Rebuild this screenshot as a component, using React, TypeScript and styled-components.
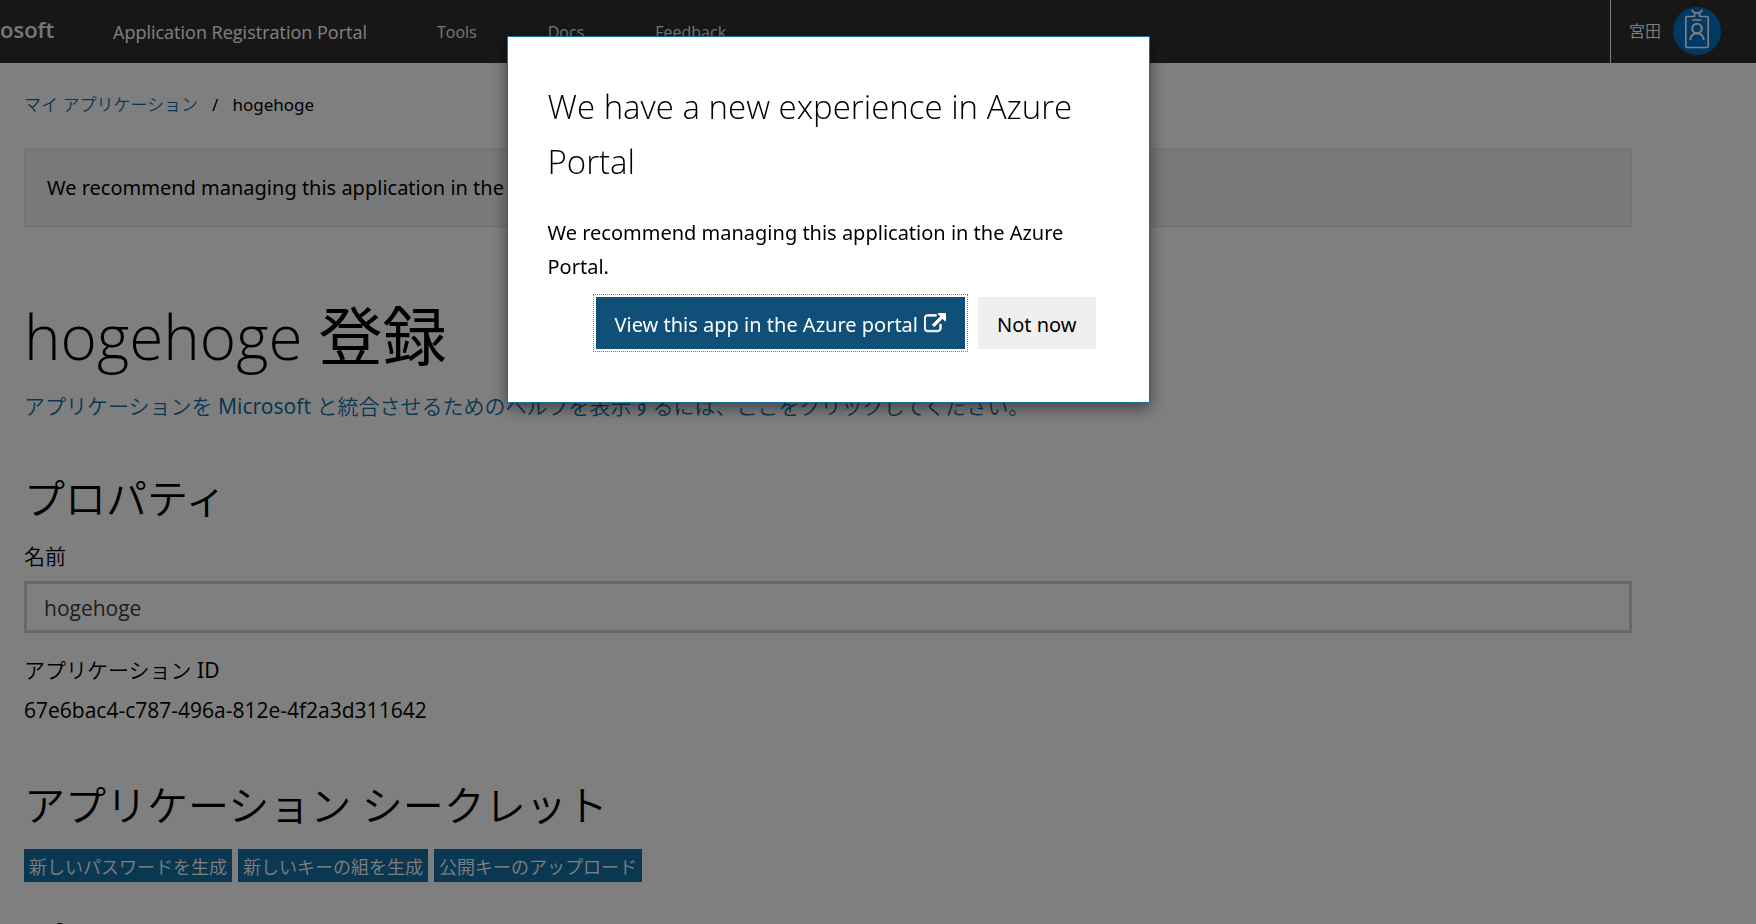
import React from "react";
import styled, { createGlobalStyle } from "styled-components";

const textFont = `"Noto Sans", "Noto Sans CJK JP", sans-serif`;
const displayFont = `"Open Sans", "Noto Sans CJK JP", sans-serif`;

const GlobalStyle = createGlobalStyle`
  *, *::before, *::after { box-sizing: border-box; }
  html, body { margin: 0; height: 100%; overflow: hidden; }
  body { background: #fff; color: #000; font: 400 20px/34px ${textFont}; }
  h1, h2, p { margin: 0; }
  h1, h2 { font-family: ${displayFont}; font-weight: 300; }
  button, input { font-family: inherit; }
`;

const Header = styled.header`
  display: flex;
  align-items: center;
  height: 63px;
  padding-right: 35px;
  background: #2f2f2f;
  color: #fff;
  font-family: ${displayFont};
`;

const Logo = styled.a`
  flex: none;
  width: 54px;
  margin-right: 59px;
  padding-bottom: 6px;
  text-align: right;
  color: #ececec;
  font-size: 22px;
  font-weight: 600;
  line-height: 32px;
  text-decoration: none;
`;

const PortalTitle = styled.a`
  flex: none;
  width: 324px;
  color: #fff;
  font-size: 18px;
  text-decoration: none;
`;

const Nav = styled.nav`
  display: flex;
  flex: 1;
  gap: 71px;
`;

const NavLink = styled.a`
  color: #ececec;
  font-size: 16px;
  text-decoration: none;
`;

const User = styled.div`
  display: flex;
  align-items: center;
  align-self: stretch;
  gap: 12px;
  padding: 0 0 1px 18px;
  border-left: 1px solid #fff;
  font-size: 16px;
  font-weight: 350;
`;

const Avatar = styled.svg`
  display: block;
  width: 48px;
  height: 48px;
`;

const Main = styled.main`
  padding: 25px 124px 0 24px;
`;

const Breadcrumb = styled.nav`
  display: flex;
  gap: 14px;
  margin-bottom: 26px;
  font-size: 17px;
`;

const Link = styled.a`
  color: #1570a6;
  font-weight: 350;
  text-decoration: none;
`;

const Banner = styled.p`
  padding: 22px 22px 21px;
  border: 1px solid #e6e6e6;
  background: #f2f2f2;
`;

const Title = styled.h1`
  margin-top: 65px;
  font-size: 62px;
  line-height: 88px;
`;

const Kanji = styled.span`
  font-size: 64px;
  font-weight: 400;
`;

const Latin = styled.span`
  font-weight: 400;
`;

const Help = styled.p`
  margin-top: 9px;
  font-size: 21px;
`;

const Section = styled.section<{ $gap: number }>`
  margin-top: ${(p) => p.$gap}px;
`;

const SectionTitle = styled.h2`
  margin-bottom: 8px;
  font-size: 41px;
  font-weight: 350;
  line-height: 60px;
`;

const Label = styled.label`
  display: block;
  font-size: 21px;
  line-height: 40px;
  font-weight: 350;
`;

const TextInput = styled.input`
  display: block;
  width: 100%;
  height: 52px;
  margin: 5px 0 17px;
  padding: 2px 17px 0;
  border: 3px solid #d2d2d2;
  background: #fff;
  color: #404040;
  font-family: ${displayFont};
  font-size: 21px;
`;

const AppId = styled.output`
  display: block;
  font-family: ${displayFont};
  font-size: 21px;
  line-height: 40px;
`;

const SmallButtons = styled.div`
  display: flex;
  gap: 6px;
  padding-top: 6px;
`;

const SmallButton = styled.button`
  height: 33px;
  padding: 0 5px;
  border: 0;
  background: #1570a6;
  color: #fff;
  font-size: 18px;
  font-weight: 350;
`;

const Overlay = styled.div`
  position: fixed;
  inset: 0;
  display: flex;
  justify-content: center;
  align-items: flex-start;
  padding: 36px 100px 0 0;
  background: rgba(0, 0, 0, 0.5);
`;

const Dialog = styled.div`
  width: 643px;
  padding: 42px 53px 53px 40px;
  border: 1px solid #1570a6;
  background: #fff;
  box-shadow: 0 5px 15px rgba(0, 0, 0, 0.5);
`;

const DialogTitle = styled.h2`
  margin-bottom: 27px;
  font-size: 33px;
  line-height: 55px;
`;

const DialogActions = styled.div`
  display: flex;
  justify-content: flex-end;
  gap: 13px;
  margin-top: 13px;
`;

const DialogButton = styled.button<{ $primary?: boolean }>`
  display: flex;
  align-items: center;
  gap: 6px;
  height: 52px;
  padding: 2px 19px 0;
  border: 0;
  background: ${(p) => (p.$primary ? "#105078" : "#efefef")};
  color: ${(p) => (p.$primary ? "#fff" : "#000")};
  font-size: 20px;
  outline: ${(p) => (p.$primary ? "1px dotted #777" : "none")};
  outline-offset: 2px;
`;

const BadgeIcon = () => (
  <Avatar viewBox="0 0 48 48" aria-hidden="true">
    <circle cx="24" cy="24" r="24" fill="#0072c6" />
    <g fill="none" stroke="#fff" strokeWidth="1.7">
      <path d="M21.500 9.500H14a1.200 1.200 0 0 0-1.200 1.200v28.600a1.200 1.200 0 0 0 1.200 1.200h20a1.200 1.200 0 0 0 1.200-1.200V10.700A1.200 1.200 0 0 0 34 9.500h-7.500" />
      <path d="M18.500 2.800l3 3v4M29.500 2.800l-3 3v4M21.500 5.800h5M19.300 13h9.400" />
      <circle cx="24" cy="21.500" r="4.800" strokeWidth="2" />
      <path d="M17.300 33c0-4 3-6.700 6.700-6.700s6.700 2.700 6.700 6.700" strokeWidth="2" />
    </g>
  </Avatar>
);

const ExternalIcon = () => (
  <svg
    width="22"
    height="22"
    viewBox="0 0 1792 1792"
    fill="currentColor"
    stroke="currentColor"
    strokeWidth="60"
    aria-hidden="true"
  >
    <path d="M1408 928v320q0 119-84.500 203.500t-203.500 84.500h-832q-119 0-203.500-84.500t-84.500-203.500v-832q0-119 84.500-203.500t203.500-84.500h704q14 0 23 9t9 23v64q0 14-9 23t-23 9h-704q-66 0-113 47t-47 113v832q0 66 47 113t113 47h832q66 0 113-47t47-113v-320q0-14 9-23t23-9h64q14 0 23 9t9 23zm384-864v512q0 26-19 45t-45 19-45-19l-176-176-652 652q-10 10-23 10t-23-10l-114-114q-10-10-10-23t10-23l652-652-176-176q-19-19-19-45t19-45 45-19h512q26 0 45 19t19 45z" />
  </svg>
);

export default function App() {
  return (
    <>
      <GlobalStyle />
      <Header>
        <Logo href="#">osoft</Logo>
        <PortalTitle href="#">Application Registration Portal</PortalTitle>
        <Nav>
          <NavLink href="#">Tools</NavLink>
          <NavLink href="#">Docs</NavLink>
          <NavLink href="#">Feedback</NavLink>
        </Nav>
        <User>
          <span>宮田</span>
          <BadgeIcon />
        </User>
      </Header>
      <Main>
        <Breadcrumb>
          <Link href="#">マイ アプリケーション</Link>
          <span>/</span>
          <span>hogehoge</span>
        </Breadcrumb>
        <Banner>We recommend managing this application in the Azure Portal.</Banner>
        <Title>
          hogehoge <Kanji>登録</Kanji>
        </Title>
        <Help>
          <Link href="#">
            アプリケーションを <Latin>Microsoft</Latin> と統合させるためのヘルプを表示するには、ここをクリックしてください。
          </Link>
        </Help>
        <Section $gap={45}>
          <SectionTitle>プロパティ</SectionTitle>
          <Label htmlFor="name">名前</Label>
          <TextInput id="name" type="text" defaultValue="hogehoge" />
          <Label htmlFor="app-id">
            アプリケーション <Latin>ID</Latin>
          </Label>
          <AppId id="app-id">67e6bac4-c787-496a-812e-4f2a3d311642</AppId>
        </Section>
        <Section $gap={45}>
          <SectionTitle>アプリケーション シークレット</SectionTitle>
          <SmallButtons>
            <SmallButton>新しいパスワードを生成</SmallButton>
            <SmallButton>新しいキーの組を生成</SmallButton>
            <SmallButton>公開キーのアップロード</SmallButton>
          </SmallButtons>
        </Section>
        <Section $gap={29}>
          <SectionTitle>プラットフォーム</SectionTitle>
        </Section>
      </Main>
      <Overlay>
        <Dialog role="dialog" aria-modal="true" aria-labelledby="dialog-title">
          <DialogTitle id="dialog-title">We have a new experience in Azure Portal</DialogTitle>
          <p>We recommend managing this application in the Azure Portal.</p>
          <DialogActions>
            <DialogButton $primary>
              View this app in the Azure portal
              <ExternalIcon />
            </DialogButton>
            <DialogButton>Not now</DialogButton>
          </DialogActions>
        </Dialog>
      </Overlay>
    </>
  );
}
